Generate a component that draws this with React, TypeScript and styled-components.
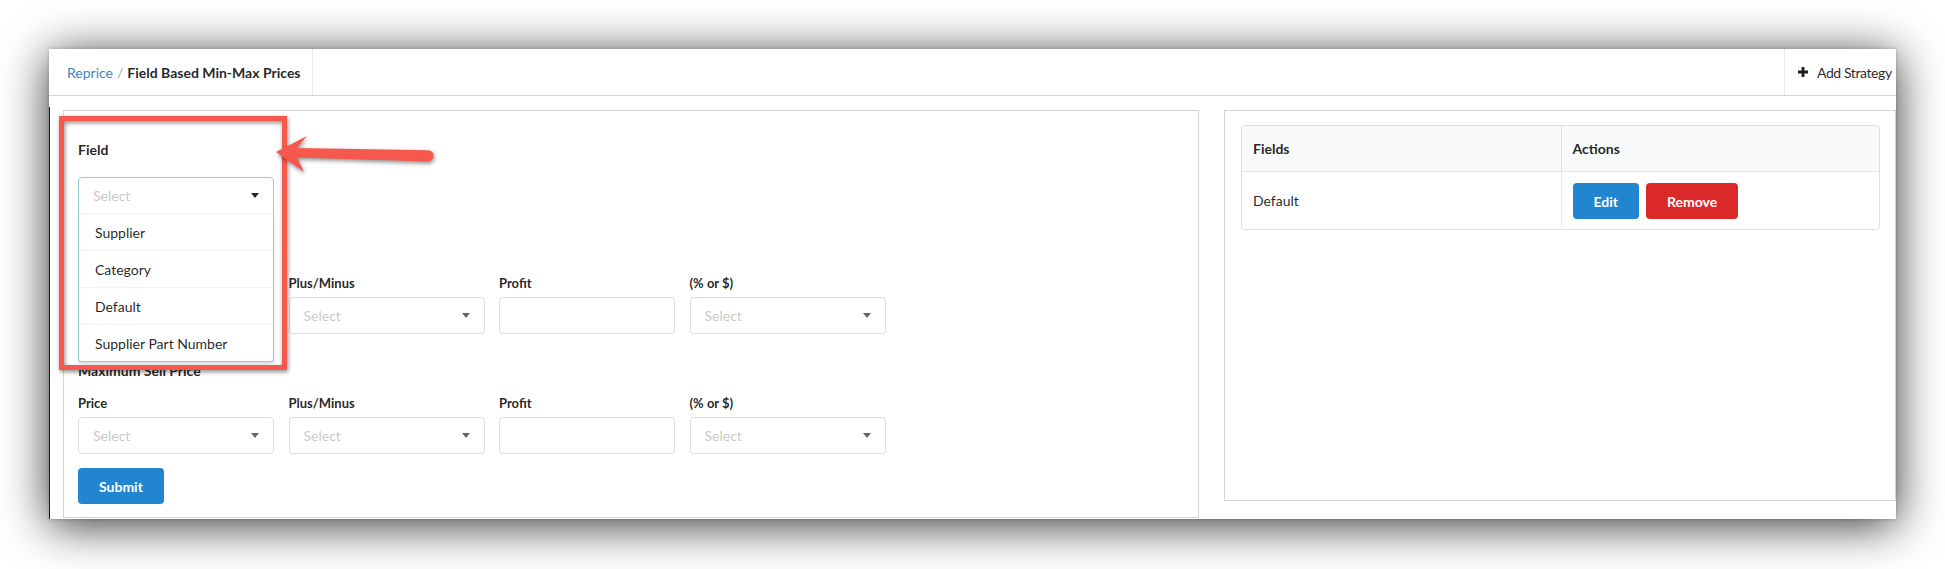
import React from "react";
import styled, { createGlobalStyle } from "styled-components";

const Global = createGlobalStyle`
  html, body { margin: 0; padding: 0; background: #fff; }
  body {
    font-family: Lato, "Open Sans", "Liberation Sans", sans-serif;
    font-size: 14px;
    color: rgba(0, 0, 0, 0.87);
    overflow: hidden;
  }
  * { box-sizing: border-box; }
`;

const Stage = styled.div`
  width: 1945px;
  height: 569px;
  padding: 49px 0 0 49px;
  background: #fff;
  overflow: hidden;
`;

const Window = styled.div`
  position: relative;
  width: 1847px;
  height: 470px;
  background: #fff;
  box-shadow: 0 6px 44px rgba(0, 0, 0, 0.8), 0 0 4px rgba(0, 0, 0, 0.2);
  display: flex;
  flex-direction: column;
`;

const TopBar = styled.header`
  display: flex;
  justify-content: space-between;
  align-items: stretch;
  height: 47px;
  border-bottom: 1px solid #d4d4d5;
  flex-shrink: 0;
`;

const BarItem = styled.div<{ $side: "left" | "right" }>`
  display: flex;
  align-items: center;
  ${(p) =>
    p.$side === "left"
      ? `width: 264px; padding-left: 18px; border-right: 1px solid rgba(34,36,38,.1);`
      : `width: 112px; padding-left: 13px; border-left: 1px solid rgba(34,36,38,.1); white-space: nowrap; overflow: hidden;`}
`;

const Crumb = styled.span<{ $active?: boolean }>`
  color: ${(p) => (p.$active ? "rgba(0,0,0,.87)" : "#4183c4")};
  font-weight: ${(p) => (p.$active ? 700 : 400)};
`;

const CrumbDivider = styled.span`
  color: rgba(0, 0, 0, 0.4);
  margin: 0 4px;
`;

const PlusIcon = styled.svg`
  width: 10px;
  height: 10px;
  margin-right: 9px;
  flex-shrink: 0;
`;

const BarText = styled.span`
  color: rgba(0, 0, 0, 0.87);
  letter-spacing: -0.4px;
`;

const Body = styled.div`
  display: flex;
  flex: 1;
  min-height: 0;
`;

const SideEdge = styled.div`
  width: 1px;
  margin-top: 11px;
  background: #1b1c1d;
  flex-shrink: 0;
`;

const Content = styled.main`
  display: flex;
  align-items: flex-start;
  gap: 25px;
  padding: 14px 0 0 13px;
  flex: 1;
`;

const Segment = styled.section`
  background: #fff;
  border: 1px solid #d4d4d5;
`;

const FormPanel = styled(Segment)`
  width: 1136px;
  padding: 30px 14px 13px 14px;
`;

const ListPanel = styled(Segment)`
  width: 672px;
  height: 391px;
  padding: 14px 15px 14px 16px;
`;

const FieldTitle = styled.div`
  font-size: 14px;
  font-weight: 700;
  line-height: 17px;
  margin-bottom: 19px;
`;

const SectionTitle = styled.div`
  font-size: 14px;
  font-weight: 700;
  line-height: 17px;
  margin: 28px 0 16px;
`;

const Row = styled.div`
  display: grid;
  grid-template-columns: 196px 196px 176px 196px;
  column-gap: 14.5px;
`;

const Field = styled.div`
  display: flex;
  flex-direction: column;
`;

const Label = styled.label`
  font-size: 13px;
  font-weight: 700;
  line-height: 16px;
  margin-bottom: 6px;
`;

const SelectBox = styled.div<{ $open?: boolean }>`
  position: relative;
  width: ${(p) => (p.$open ? "196px" : "auto")};
  height: 37px;
  display: flex;
  align-items: center;
  padding: 0 14px;
  background: #fff;
  border: 1px solid ${(p) => (p.$open ? "#96c8da" : "rgba(34,36,38,.15)")};
  border-radius: ${(p) => (p.$open ? "4px 4px 0 0" : "4px")};
  color: rgba(191, 191, 191, 0.87);
  font-size: 14px;
`;

const Caret = styled.span<{ $open?: boolean }>`
  margin-left: auto;
  width: 0;
  height: 0;
  border-left: 4px solid transparent;
  border-right: 4px solid transparent;
  border-top: 5px solid ${(p) => (p.$open ? "rgba(0,0,0,.85)" : "rgba(0,0,0,.6)")};
`;

const Menu = styled.div`
  position: absolute;
  top: 100%;
  left: -1px;
  right: -1px;
  background: #fff;
  border: 1px solid #96c8da;
  border-top: 0;
  border-radius: 0 0 4px 4px;
  box-shadow: 0 2px 3px 0 rgba(34, 36, 38, 0.15);
  z-index: 5;
`;

const MenuItem = styled.div`
  height: 37px;
  display: flex;
  align-items: center;
  padding: 0 16px;
  border-top: 1px solid #f3f3f3;
  color: rgba(0, 0, 0, 0.87);
  font-size: 14px;
`;

const TextInput = styled.input`
  height: 37px;
  width: 100%;
  border: 1px solid rgba(34, 36, 38, 0.15);
  border-radius: 4px;
  padding: 0 14px;
  font: inherit;
  outline: none;
`;

const Button = styled.button<{ $color: "blue" | "red" }>`
  height: 36px;
  padding: 0 21px;
  border: 0;
  border-radius: 4px;
  font-family: Lato, "Open Sans", "Liberation Sans", sans-serif;
  font-size: 14px;
  font-weight: 700;
  color: #fff;
  background: ${(p) => (p.$color === "blue" ? "#2185d0" : "#db2828")};
  cursor: pointer;
`;

const SubmitRow = styled.div`
  margin-top: 14px;
`;

const Table = styled.table`
  width: 100%;
  border-collapse: separate;
  border-spacing: 0;
  border: 1px solid rgba(34, 36, 38, 0.15);
  border-radius: 4px;
  font-size: 14px;
`;

const Th = styled.th`
  width: 50%;
  text-align: left;
  font-weight: 700;
  background: #f9fafb;
  padding: 12px 11px;
  line-height: 21px;
  border-bottom: 1px solid rgba(34, 36, 38, 0.1);
  &:first-child { border-top-left-radius: 4px; }
  &:last-child { border-top-right-radius: 4px; }
  & + & { border-left: 1px solid rgba(34, 36, 38, 0.1); }
`;

const Td = styled.td`
  padding: 11px 11px 10px;
  vertical-align: middle;
  line-height: 20px;
  & + & { border-left: 1px solid rgba(34, 36, 38, 0.1); }
`;

const Actions = styled.div`
  display: flex;
  gap: 7px;
`;

const Highlight = styled.div`
  position: absolute;
  left: 10px;
  top: 67px;
  width: 228px;
  height: 254px;
  border: 5.5px solid #f7584e;
  filter: drop-shadow(1px 2px 2px rgba(0, 0, 0, 0.45));
  pointer-events: none;
  z-index: 10;
`;

const ArrowSvg = styled.svg`
  position: absolute;
  left: 219px;
  top: 79px;
  width: 170px;
  height: 52px;
  overflow: visible;
  filter: drop-shadow(1px 2px 2px rgba(0, 0, 0, 0.45));
  pointer-events: none;
  z-index: 11;
`;

type Col = { label: string; kind: "select" | "input" };
const cols: Col[] = [
  { label: "Price", kind: "select" },
  { label: "Plus/Minus", kind: "select" },
  { label: "Profit", kind: "input" },
  { label: "(% or $)", kind: "select" },
];

function PriceRow() {
  return (
    <Row>
      {cols.map((c) => (
        <Field key={c.label}>
          <Label>{c.label}</Label>
          {c.kind === "select" ? (
            <SelectBox>
              Select
              <Caret />
            </SelectBox>
          ) : (
            <TextInput type="text" />
          )}
        </Field>
      ))}
    </Row>
  );
}

export default function App() {
  return (
    <>
      <Global />
      <Stage>
        <Window>
          <TopBar>
            <BarItem $side="left">
              <Crumb>Reprice</Crumb>
              <CrumbDivider>/</CrumbDivider>
              <Crumb $active>Field Based Min-Max Prices</Crumb>
            </BarItem>
            <BarItem $side="right">
              <PlusIcon viewBox="0 0 10 10">
                <path d="M3.6 0h2.8v3.6H10v2.8H6.4V10H3.6V6.4H0V3.6h3.6z" fill="#1b1c1d" />
              </PlusIcon>
              <BarText>Add Strategy</BarText>
            </BarItem>
          </TopBar>
          <Body>
            <SideEdge />
            <Content>
              <FormPanel>
                <FieldTitle>Field</FieldTitle>
                <SelectBox $open>
                  Select
                  <Caret $open />
                  <Menu>
                    <MenuItem>Supplier</MenuItem>
                    <MenuItem>Category</MenuItem>
                    <MenuItem>Default</MenuItem>
                    <MenuItem>Supplier Part Number</MenuItem>
                  </Menu>
                </SelectBox>
                <SectionTitle>Minimum Sell Price</SectionTitle>
                <PriceRow />
                <SectionTitle>Maximum Sell Price</SectionTitle>
                <PriceRow />
                <SubmitRow>
                  <Button $color="blue">Submit</Button>
                </SubmitRow>
              </FormPanel>
              <ListPanel>
                <Table>
                  <thead>
                    <tr>
                      <Th>Fields</Th>
                      <Th>Actions</Th>
                    </tr>
                  </thead>
                  <tbody>
                    <tr>
                      <Td>Default</Td>
                      <Td>
                        <Actions>
                          <Button $color="blue">Edit</Button>
                          <Button $color="red">Remove</Button>
                        </Actions>
                      </Td>
                    </tr>
                  </tbody>
                </Table>
              </ListPanel>
            </Content>
          </Body>
          <Highlight />
          <ArrowSvg viewBox="0 0 170 52">
            <path
              d="M8 24 L39 8 Q33 15 29 20 L160 22.2 A5.6 5.6 0 0 1 160 33.4 L29 29.5 Q32 36 36 44 Z"
              fill="#f7584e"
            />
          </ArrowSvg>
        </Window>
      </Stage>
    </>
  );
}
